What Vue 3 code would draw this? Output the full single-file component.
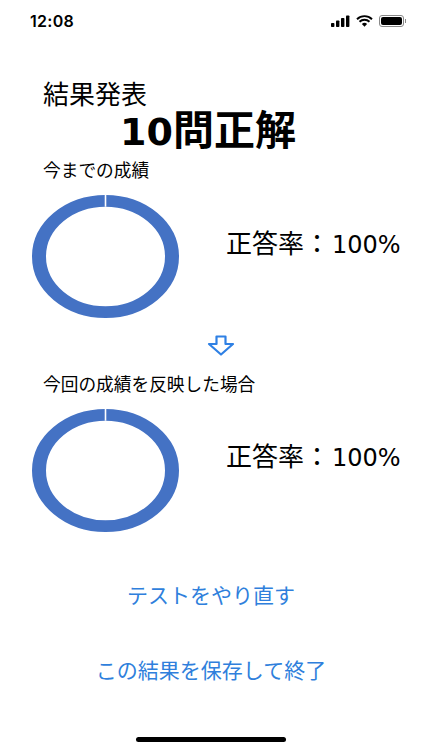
<template>
  <div class="screen">
    <div class="status-bar">
      <span class="time">12:08</span>
      <div class="status-icons">
        <svg width="19" height="12" viewBox="0 0 19 12">
          <rect x="0" y="8" width="3.4" height="4" rx="0.8" fill="#000" />
          <rect x="5" y="5.5" width="3.4" height="6.5" rx="0.8" fill="#000" />
          <rect x="10" y="3" width="3.4" height="9" rx="0.8" fill="#000" />
          <rect x="15" y="0.5" width="3.4" height="11.5" rx="0.8" fill="#000" />
        </svg>
        <svg width="17" height="12" viewBox="0 0 17 12">
          <path d="M1 4.2a10.8 10.8 0 0 1 15 0M3.5 6.8a7.2 7.2 0 0 1 10 0" fill="none" stroke="#000" stroke-width="1.9" />
          <path d="M5.9 9a3.6 3.6 0 0 1 5.2 0L8.5 11.8z" fill="#000" />
        </svg>
        <div class="battery"><div class="battery-fill"></div></div>
        <div class="battery-cap"></div>
      </div>
    </div>

    <h1 class="heading">結果発表</h1>
    <p class="score"><span class="score-num">10</span>問正解</p>

    <section v-for="(row, i) in rows" :key="i" class="result" :class="{ second: i === 1 }">
      <p class="label">{{ row.label }}</p>
      <div class="chart-row">
        <!-- 横長の楕円なので viewBox を潰して描く -->
        <svg class="ring" width="147" height="123" viewBox="0 0 147 147" preserveAspectRatio="none">
          <circle cx="73.5" cy="73.5" r="66.5" fill="none" stroke="#4472c4" stroke-width="14" />
          <rect x="72.7" y="0" width="1.6" height="14" fill="#fff" />
        </svg>
        <span class="rate" :class="{ raised: i === 1 }">正答率：<span class="rate-num">{{ row.rate }}%</span></span>
      </div>
      <div v-if="i === 0" class="arrow">
        <svg width="28" height="21" viewBox="0 0 28 21">
          <path d="M9.5 1.5h9V9H26L14 19.5 2 9h7.5z" fill="none" stroke="#2f80e4" stroke-width="2.2" stroke-linejoin="round" />
        </svg>
      </div>
    </section>

    <div class="actions">
      <button class="link">テストをやり直す</button>
      <button class="link">この結果を保存して終了</button>
    </div>

    <div class="home-bar"></div>
  </div>
</template>

<script setup>
const rows = [
  { label: '今までの成績', rate: 100 },
  { label: '今回の成績を反映した場合', rate: 100 },
];
</script>

<style scoped>
.screen {
  width: 422px;
  height: 750px;
  background: #fff;
  color: #000;
  overflow: hidden;
  display: flex;
  flex-direction: column;
  font-family: "Noto Sans CJK JP", "Liberation Sans", sans-serif;
}
.status-bar {
  height: 44px;
  flex: none;
  display: flex;
  align-items: center;
  justify-content: space-between;
  padding: 0 16px 2px 30px;
  box-sizing: border-box;
}
.time {
  font-family: Inter, "Liberation Sans", sans-serif;
  font-size: 16px;
  font-weight: 600;
  letter-spacing: 0.3px;
}
.status-icons {
  display: flex;
  align-items: center;
  gap: 6px;
}
.battery {
  width: 25px;
  height: 12px;
  border: 1px solid #888;
  border-radius: 3px;
  padding: 1px;
  box-sizing: border-box;
}
.battery-fill {
  height: 100%;
  background: #000;
  border-radius: 2px;
}
.battery-cap {
  width: 1px;
  height: 4px;
  background: #888;
  margin-left: -5px;
}
.heading {
  margin: 30px 0 0 43px;
  font-size: 26px;
  line-height: 38px;
  font-weight: 400;
}
.score {
  margin: -6px 0 6px;
  padding-left: 120px;
  font-size: 41px;
  line-height: 42px;
  font-weight: 700;
  white-space: nowrap;
}
.score-num {
  font-family: "DejaVu Sans", sans-serif;
  font-size: 38px;
  line-height: 0;
}
.result {
  display: flex;
  flex-direction: column;
}
.label {
  margin: 3px 0 0 43px;
  font-size: 17.7px;
  line-height: 24px;
}
.chart-row {
  display: flex;
  align-items: flex-start;
  margin: 14px 0 0 32px;
}
.ring {
  flex: none;
}
.rate {
  margin: 29px 0 0 47px;
  font-size: 26px;
  line-height: 36px;
  white-space: nowrap;
}
.rate-num {
  margin-left: 2px;
  font-family: "DejaVu Sans", sans-serif;
  font-size: 24px;
  line-height: 0;
}
.rate.raised {
  margin-top: 28px;
}
.arrow {
  display: flex;
  justify-content: center;
  margin-top: 17px;
  padding-left: 20px;
  height: 36px;
}
.second .label {
  margin-top: 0;
}
.second .chart-row {
  margin-top: 14px;
}
.actions {
  display: flex;
  flex-direction: column;
  align-items: center;
  gap: 45px;
  margin-top: 47px;
}
.link {
  border: none;
  background: none;
  padding: 0;
  color: #2f7fdc;
  font-family: inherit;
  font-size: 21px;
  line-height: 30px;
}
.home-bar {
  width: 150px;
  height: 5px;
  margin: auto auto 8px;
  border-radius: 3px;
  background: #000;
}
</style>
